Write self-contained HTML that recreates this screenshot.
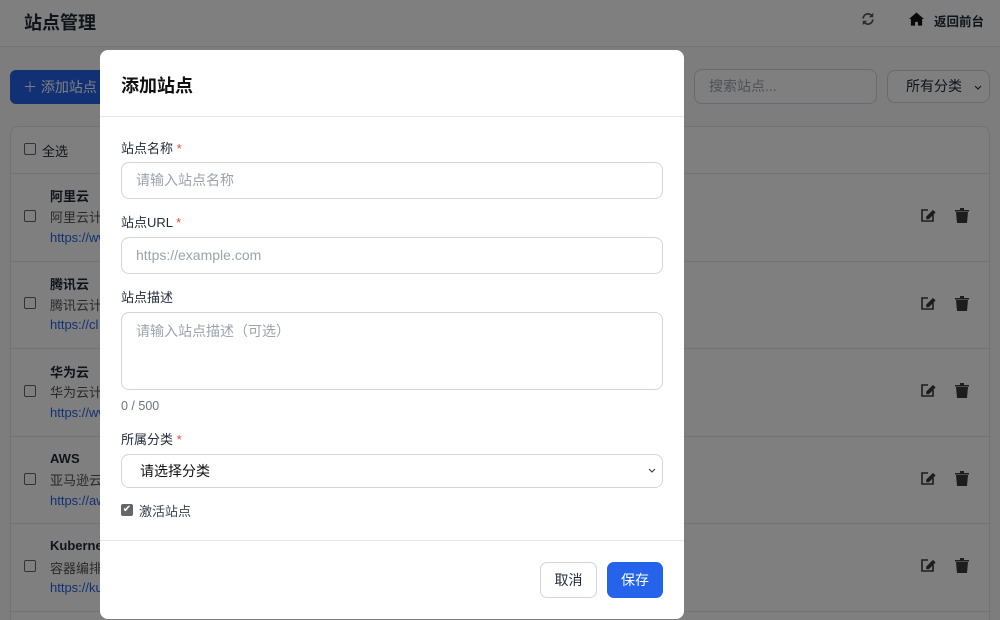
<!DOCTYPE html>
<html><head><meta charset="utf-8"><style>
*{box-sizing:border-box;margin:0;padding:0}
html,body{width:1000px;height:620px;overflow:hidden}
body{position:relative;background:#fafafa;font-family:"Liberation Sans","Noto Sans CJK SC",sans-serif;color:#1f2937}
.abs{position:absolute;white-space:nowrap}
.hdr{left:0;top:0;width:1000px;height:47px;background:#fff;border-bottom:1px solid #e5e7eb}
.card{left:10px;top:126px;width:980px;height:494px;background:#fff;border:1px solid #e5e7eb;border-bottom:none;border-radius:8px 8px 0 0}
.cb{width:12px;height:12px;border:1px solid #666;border-radius:2px;background:#fff}
.row{left:11px;width:978px;height:88px;border-top:1px solid #e5e7eb}
.ov{left:0;top:0;width:1000px;height:620px;background:rgba(0,0,0,0.5)}
.modal{left:100px;top:50px;width:584px;height:569px;background:#fff;border-radius:8px}
.lbl{font-size:13px;color:#1f2937;left:21px}
.lbl b{color:#ef4444;font-weight:normal}
.inp{left:21px;width:542px;border:1px solid #d1d5db;border-radius:8px;font-size:14px;color:#9ca3af;padding-left:14px}
.nm{left:50px;font-size:13px;font-weight:bold}
.ds{left:50px;font-size:13px;color:#555}
.ur{left:50px;font-size:13px;color:#2563eb}
</style></head><body>
<div class="abs hdr"></div>
<div class="abs" style="left:24px;top:9px;font-size:18px;font-weight:bold">站点管理</div>
<svg class="abs" style="left:861px;top:12px" width="14" height="14" viewBox="0 0 16 16" fill="none" stroke="#555" stroke-width="2"><path d="M2.5 7.5a5.5 5.5 0 0 1 10-3M13.5 8.5a5.5 5.5 0 0 1-10 3"/><path d="M14 1v5h-5zM2 15v-5h5z" fill="#555" stroke="none"/></svg>
<svg class="abs" style="left:909px;top:12px" width="15" height="14" viewBox="0 0 16 14"><path d="M8 0L0 7h2v7h4.5v-4h3v4H14V7h2z" fill="#111"/></svg>
<div class="abs" style="left:934px;top:11px;font-size:12.5px;font-weight:bold">返回前台</div>
<div class="abs" style="left:10px;top:70px;width:100px;height:34px;background:#2563eb;border-radius:6px;color:#fff;font-size:14px;line-height:34px;padding-left:13px">＋ 添加站点</div>
<div class="abs" style="left:694px;top:69px;width:183px;height:35px;border:1px solid #d1d5db;border-radius:8px;background:#fff;font-size:14px;color:#9ca3af;line-height:33px;padding-left:14px">搜索站点...</div>
<div class="abs" style="left:887px;top:70px;width:103px;height:33px;border:1px solid #d1d5db;border-radius:8px;background:#fff;font-size:14px;line-height:31px;padding-left:18px">所有分类</div>
<div class="abs card"></div>
<div class="abs cb" style="left:24px;top:143px"></div>
<div class="abs" style="left:42px;top:141px;font-size:13px">全选</div>
<div class="abs row" style="top:173px"></div><div class="abs row" style="top:261px"></div><div class="abs row" style="top:348px"></div><div class="abs row" style="top:436px"></div><div class="abs row" style="top:523px"></div><div class="abs row" style="top:611px;height:9px"></div>
<div class="abs cb" style="left:24px;top:210px"></div><div class="abs nm" style="top:186px">阿里云</div><div class="abs ds" style="top:207px">阿里云计算</div><div class="abs ur" style="top:230px">https://www</div>
<div class="abs cb" style="left:24px;top:297px"></div><div class="abs nm" style="top:274px">腾讯云</div><div class="abs ds" style="top:295px">腾讯云计算</div><div class="abs ur" style="top:317px">https://cl</div>
<div class="abs cb" style="left:24px;top:385px"></div><div class="abs nm" style="top:362px">华为云</div><div class="abs ds" style="top:382px">华为云计算</div><div class="abs ur" style="top:405px">https://www</div>
<div class="abs cb" style="left:24px;top:473px"></div><div class="abs nm" style="top:451px">AWS</div><div class="abs ds" style="top:470px">亚马逊云服</div><div class="abs ur" style="top:493px">https://aws</div>
<div class="abs cb" style="left:24px;top:560px"></div><div class="abs nm" style="top:538px">Kubernetes</div><div class="abs ds" style="top:558px">容器编排平</div><div class="abs ur" style="top:580px">https://kub</div>
<svg class="abs" style="left:0;top:0" width="1000" height="620">
<defs><g id="e" fill="none" stroke="#3a3a3a" stroke-width="1.6"><path d="M928 210h-6v11h11v-6"/><path d="M927 217l6-6 1.5 1.5-6 6h-1.5z" fill="#3a3a3a"/></g>
<path id="t" d="M955 210h14v1.5h-14zM960 208h4v2h-4zM956 212h12l-1 11h-10z" fill="#3a3a3a"/></defs>
<use href="#e"/><use href="#e" y="88"/><use href="#e" y="175"/><use href="#e" y="263"/><use href="#e" y="350"/>
<use href="#t"/><use href="#t" y="88"/><use href="#t" y="175"/><use href="#t" y="263"/><use href="#t" y="350"/>
<path d="M975 86l3 3 3-3" fill="none" stroke="#222"/>
</svg>
<div class="abs ov"></div>
<div class="abs modal">
<div class="abs" style="left:21px;top:22px;font-size:18px;font-weight:bold;color:#111">添加站点</div>
<div class="abs" style="left:0;top:66px;width:584px;border-top:1px solid #e5e7eb"></div>
<div class="abs lbl" style="top:88px">站点名称 <b>*</b></div>
<div class="abs inp" style="top:112px;height:37px;line-height:35px">请输入站点名称</div>
<div class="abs lbl" style="top:162px">站点URL <b>*</b></div>
<div class="abs inp" style="top:187px;height:37px;line-height:35px">https://example.com</div>
<div class="abs lbl" style="top:237px">站点描述</div>
<div class="abs inp" style="top:262px;height:78px;padding-top:8px">请输入站点描述（可选）</div>
<div class="abs" style="left:21px;top:349px;font-size:12.5px;color:#6b7280">0 / 500</div>
<div class="abs lbl" style="top:379px">所属分类 <b>*</b></div>
<div class="abs inp" style="top:404px;height:34px;line-height:32px;color:#111;padding-left:18px">请选择分类<svg class="abs" style="right:6px;top:13px" width="8" height="6" viewBox="0 0 8 6"><path d="M1 1l3 3 3-3" fill="none" stroke="#333" stroke-width="1"/></svg></div>
<div class="abs" style="left:21px;top:454px;width:12px;height:12px;background:#666;border-radius:2px;color:#fff;font-size:10px;line-height:12px;text-align:center">✔</div>
<div class="abs" style="left:39px;top:451px;font-size:13px;color:#374151">激活站点</div>
<div class="abs" style="left:0;top:490px;width:584px;border-top:1px solid #e5e7eb"></div>
<div class="abs" style="left:440px;top:512px;width:57px;height:36px;border:1px solid #d1d5db;border-radius:7px;font-size:14px;line-height:34px;text-align:center">取消</div>
<div class="abs" style="left:507px;top:512px;width:56px;height:36px;background:#2563eb;border-radius:7px;font-size:14px;line-height:36px;text-align:center;color:#fff">保存</div>
</div>
</body></html>
